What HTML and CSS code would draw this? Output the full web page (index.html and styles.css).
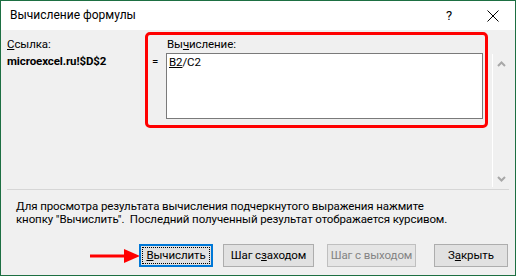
FILE: index.html
```html
<!DOCTYPE html>
<html lang="ru">
<head>
<meta charset="utf-8">
<title>Вычисление формулы</title>
<link rel="stylesheet" href="styles.css">
</head>
<body>
<div class="window">
  <div class="titlebar">
    <span class="title">Вычисление формулы</span>
    <span class="help">?</span>
    <svg class="close" width="12" height="12" viewBox="0 0 12 12"><path d="M0.5 0.5L11.5 11.5M11.5 0.5L0.5 11.5" stroke="#000" stroke-width="1" fill="none"/></svg>
  </div>
  <div class="content">
    <div class="main">
      <div class="ref">
        <div class="label"><u>С</u>сылка:</div>
        <div class="refval">microexcel.ru!$D$2</div>
      </div>
      <div class="evalgroup">
        <div class="label evallabel">Вы<u>ч</u>исление:</div>
        <div class="evalrow">
          <span class="eq">=</span>
          <div class="evalbox"><u>B2</u>/C2</div>
        </div>
      </div>
      <div class="scrollbar">
        <svg class="chev" width="9" height="6" viewBox="0 0 9 6"><path d="M1 5L4.5 1.5L8 5" stroke="#a8a8a8" stroke-width="2" fill="none"/></svg>
        <svg class="chev" width="9" height="6" viewBox="0 0 9 6"><path d="M1 1L4.5 4.5L8 1" stroke="#a8a8a8" stroke-width="2" fill="none"/></svg>
      </div>
    </div>
    <div class="sep"></div>
    <p class="hint">Для просмотра результата вычисления подчеркнутого выражения нажмите<br>кнопку "Вычислить".&nbsp; Последний полученный результат отображается курсивом.</p>
    <div class="buttons">
      <svg class="arrow" width="50" height="16" viewBox="0 0 50 16"><path d="M0 8H38" stroke="#ff0000" stroke-width="3"/><path d="M34 1L50 8L34 15Z" fill="#ff0000"/></svg>
      <button class="btn btn-default"><span class="focus"><u>В</u>ычислить</span></button>
      <button class="btn btn-in">Шаг с <u>з</u>аходом</button>
      <button class="btn btn-out" disabled>Шаг с выходом</button>
      <button class="btn btn-close">З<u>а</u>крыть</button>
    </div>
  </div>
</div>
</body>
</html>
```

FILE: styles.css
```css
* { box-sizing: border-box; }
html, body { margin: 0; padding: 0; }
body {
  width: 516px;
  height: 276px;
  font-family: Roboto, "Noto Sans", sans-serif;
  font-size: 11.5px;
  letter-spacing: -0.1px;
  color: #000;
  background: #ffffff;
}
.window {
  width: 516px;
  height: 276px;
  border: 1px solid #1d6f42;
  display: flex;
  flex-direction: column;
}
.titlebar {
  height: 29px;
  background: #fff;
  display: flex;
  align-items: center;
  flex: none;
}
.title {
  padding-left: 9px;
  flex: 1;
  font-size: 12px;
  letter-spacing: 0;
  line-height: 15px;
}
.help {
  font-size: 13px;
  line-height: 15px;
  margin-right: 35px;
}
.close {
  margin-right: 16px;
  display: block;
}
.content {
  flex: 1;
  background: #f0f0f0;
  display: flex;
  flex-direction: column;
}
.main {
  display: flex;
  align-items: flex-start;
  height: 157px;
  flex: none;
}
.ref {
  width: 144px;
  padding-left: 6px;
  padding-top: 7px;
  flex: none;
}
.label { line-height: 15px; }
.refval {
  font-weight: bold;
  line-height: 15px;
  margin-top: 2px;
}
.evalgroup {
  width: 343px;
  height: 96px;
  margin-top: 2px;
  border: 3px solid #ff0000;
  border-radius: 5px;
  padding: 2px 2px 6px 0;
  display: flex;
  flex-direction: column;
  flex: none;
}
.evallabel { padding-left: 19px; }
.evalrow {
  display: flex;
  flex: 1;
  margin-top: 1px;
}
.eq {
  width: 18px;
  padding-left: 4px;
  line-height: 17px;
  flex: none;
}
.evalbox {
  flex: 1;
  background: #fff;
  border: 1px solid #7a7a7a;
  padding: 1px 2px 0;
  line-height: 15px;
}
.scrollbar {
  width: 17px;
  height: 133px;
  margin-top: 24px;
  margin-left: 4px;
  border-left: 1px solid #ffffff;
  display: flex;
  flex-direction: column;
  justify-content: space-between;
  align-items: center;
  padding: 7px 0 5px;
  flex: none;
}
.chev { display: block; }
.sep {
  height: 1px;
  background: #d6d6d6;
  margin: 2px 6px 0;
  flex: none;
}
.hint {
  margin: 10px 0 0 15px;
  line-height: 13px;
}
.buttons {
  margin-top: auto;
  margin-bottom: 8px;
  display: flex;
  align-items: center;
  padding-left: 89px;
}
.arrow { display: block; margin-right: -1px; }
.btn {
  font-family: inherit;
  font-size: 11.5px;
  letter-spacing: -0.1px;
  height: 23px;
  padding: 0;
  background: #e1e1e1;
  border: 1px solid #adadad;
  color: #000;
  display: flex;
  align-items: center;
  justify-content: center;
  line-height: 15px;
  white-space: nowrap;
}
.btn-default {
  width: 74px;
  border: 2px solid #0078d7;
  padding: 1px;
}
.focus {
  display: flex;
  align-items: center;
  justify-content: center;
  width: 100%;
  height: 100%;
  border: 1px dotted #000;
}
.btn-in { width: 91px; margin-left: 10px; }
.btn-out {
  width: 89px;
  margin-left: 13px;
  color: #838383;
  border-color: #bfbfbf;
  background: #e5e5e5;
}
.btn-close { width: 74px; margin-left: 18px; }
```
